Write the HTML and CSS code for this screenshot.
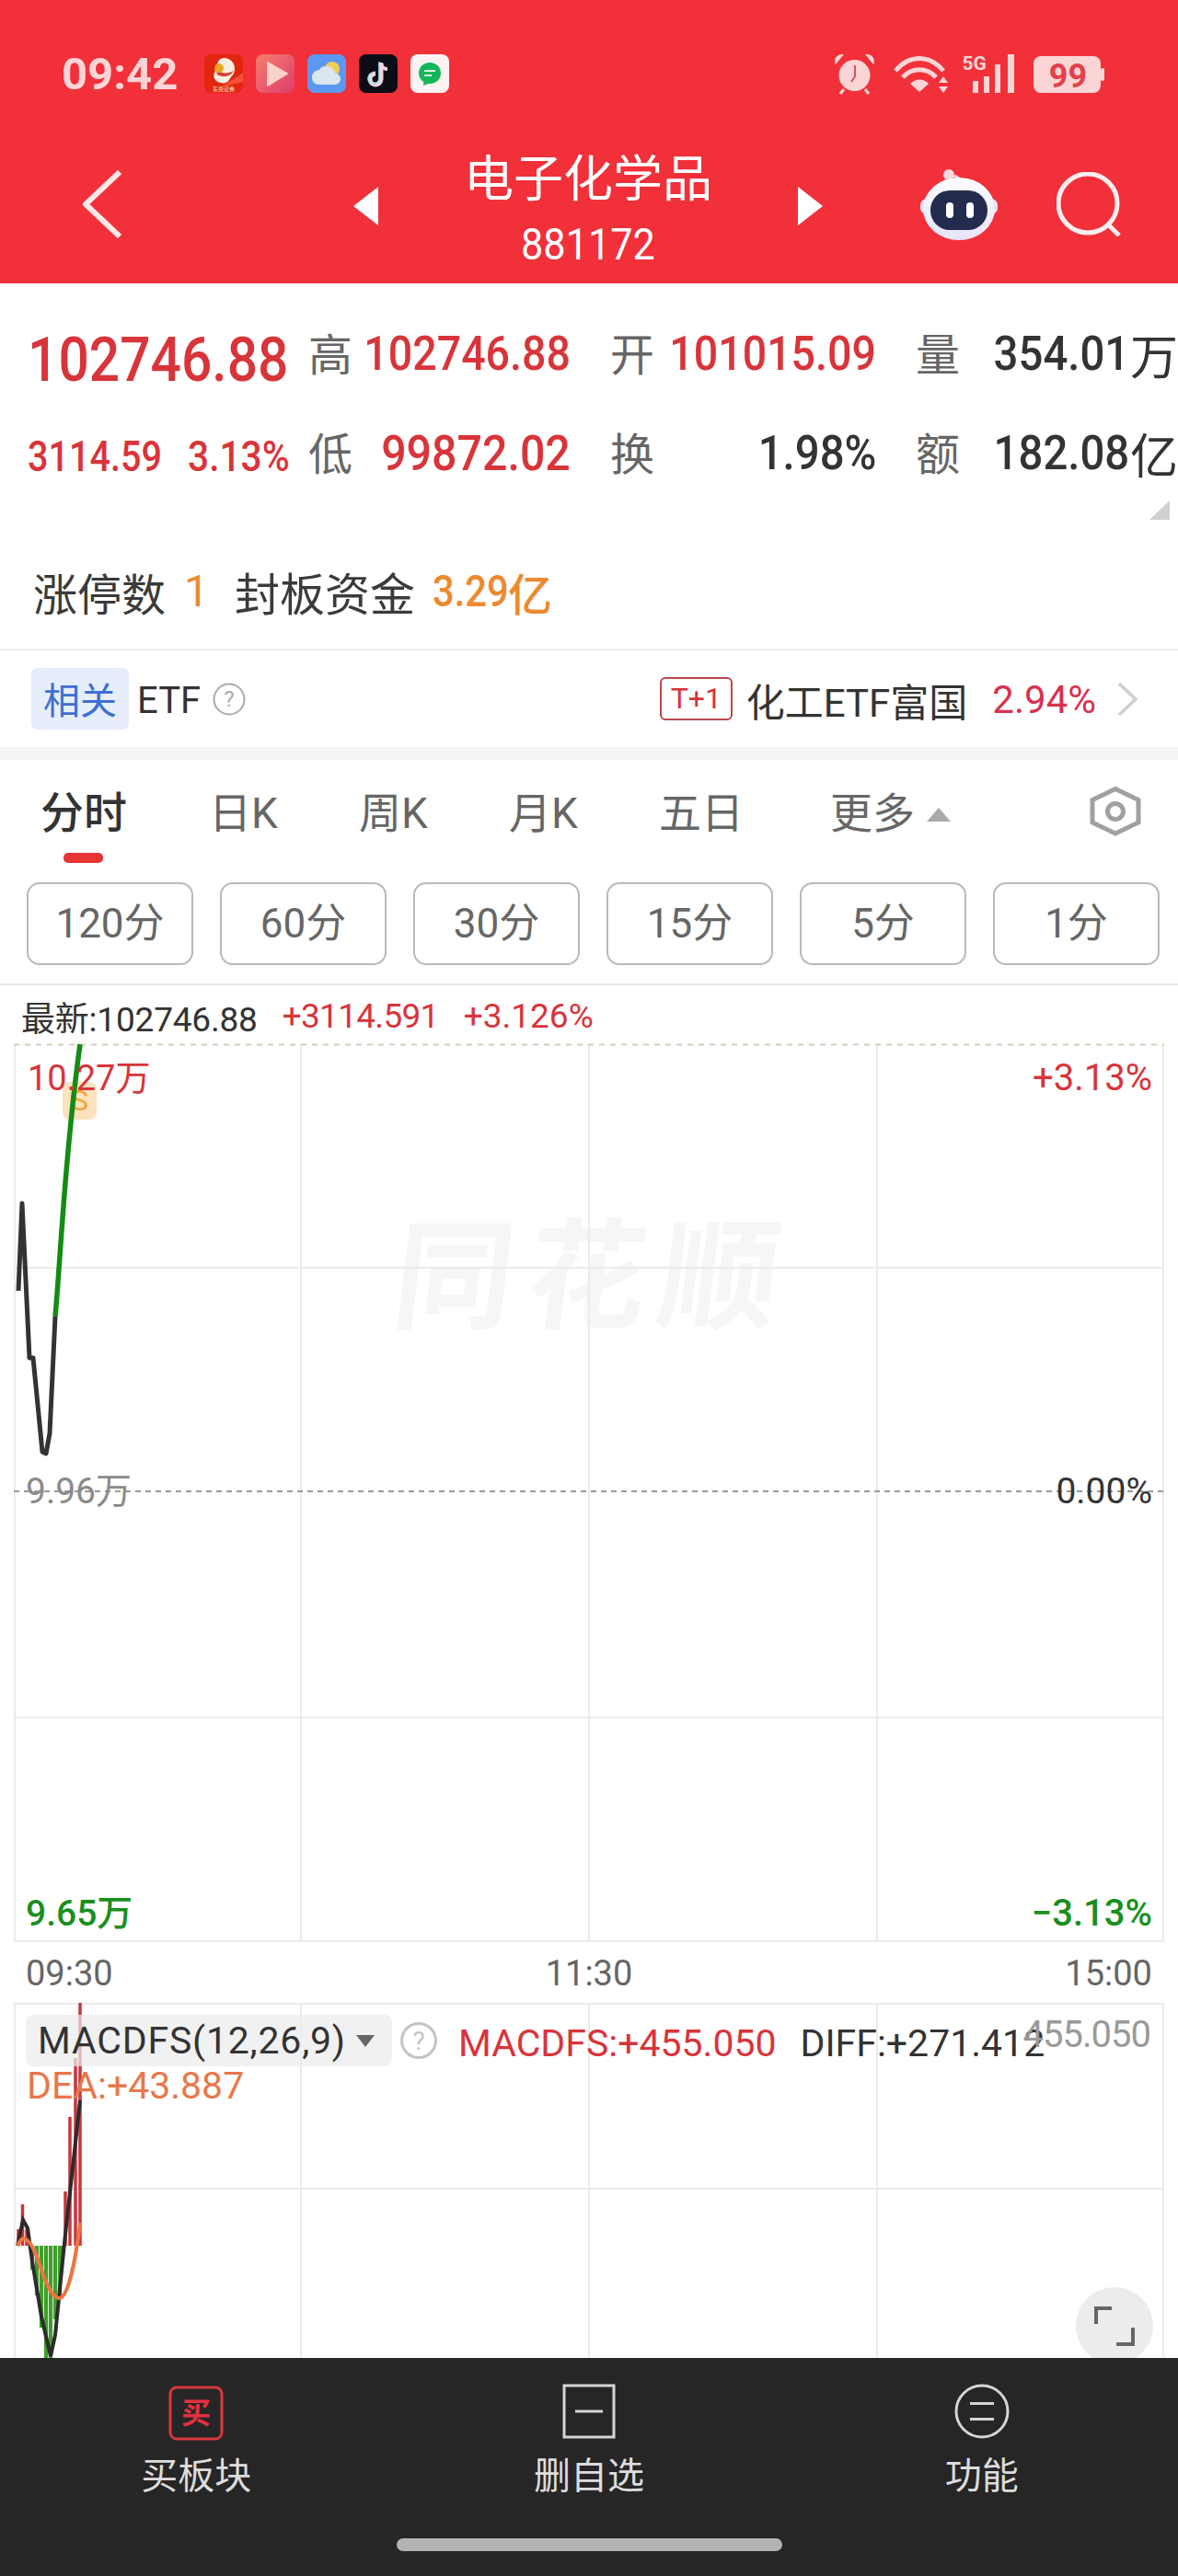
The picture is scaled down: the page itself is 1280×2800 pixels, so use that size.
FILE: index.html
```html
<!DOCTYPE html>
<html lang="zh-CN">
<head>
<meta charset="utf-8">
<title>电子化学品</title>
<link rel="stylesheet" href="styles.css">
</head>
<body>
<div class="phone">
  <header class="header">
    <div class="status">
      <span class="clock">09:42</span>
      <div class="apps">
        <svg class="app" viewBox="0 0 42 42"><rect width="42" height="42" rx="8" fill="#e2260f"/><path d="M42 20 L18 36 L42 30Z" fill="#f4503a"/><path d="M21 4c8 0 12 6 12 12 0 6-4 8-6 12-2 3-6 4-9 3-6-1-9-6-7-11 1-4 3-5 3-8 0-4 3-8 7-8z" fill="#fbeee0"/><path d="M12 15c5 6 12 7 20 3-3 6-12 8-18 4z" fill="#d8442f"/><circle cx="16" cy="15" r="5" fill="#e9a81f"/><text class="app-tiny" x="21" y="39.500">东莞证券</text></svg>
        <svg class="app" viewBox="0 0 42 42"><defs><linearGradient id="pl" x1="0" y1="0" x2="1" y2="1"><stop offset="0" stop-color="#f77d6d"/><stop offset="1" stop-color="#dd3d6c"/></linearGradient></defs><rect width="42" height="42" rx="8" fill="url(#pl)"/><path d="M13 9 L34 21 L13 34Z" fill="#fbd2c8" stroke="#fbd2c8" stroke-width="2" stroke-linejoin="round"/></svg>
        <svg class="app" viewBox="0 0 42 42"><rect width="42" height="42" rx="8" fill="#5c97f2"/><circle cx="27" cy="16" r="8" fill="#f3cd55"/><path d="M13 33c-5 0-8-3-8-8s4-8 8-8c2-4 6-5 10-4 4 1 7 4 7 8 4 0 6 3 6 6s-3 6-6 6z" fill="#dbe6ef"/></svg>
        <svg class="app" viewBox="0 0 42 42"><rect width="42" height="42" rx="8" fill="#0c0c14"/><path d="M24 10v17a6 6 0 1 1-6-6" fill="none" stroke="#f5d5dc" stroke-width="5"/><path d="M24 9c0 4 3 7 7 7" fill="none" stroke="#f5d5dc" stroke-width="4"/><path d="M22 8v18a6 6 0 1 1-6-6" fill="none" stroke="#8fe3e8" stroke-width="1.500"/></svg>
        <svg class="app" viewBox="0 0 42 42"><rect width="42" height="42" rx="8" fill="#fdf3f3"/><path d="M21 9c7 0 12 5 12 11.500S28 32 21 32c-2 0-3 0-4 1l-3 1 .5-4C11 28 9 24 9 20.500 9 14 14 9 21 9z" fill="#14b65a"/><path d="M15 18h12M15 23h8" stroke="#dff5e8" stroke-width="2"/></svg>
      </div>
      <div class="sys">
        <svg class="ic-alarm" viewBox="907 57 43 46"><circle cx="928.500" cy="82" r="17" fill="#fbd5d5"/><path d="M908 70c-3-6 2-12 9-11z M949 70c3-6-2-12-9-11z" fill="#fbd5d5"/><path d="M917 97l-4 5M940 97l4 5" stroke="#fbd5d5" stroke-width="3"/><path d="M929 71v12l-4 6" stroke="#d2545a" stroke-width="2" fill="none"/></svg>
        <svg class="ic-wifi" viewBox="971 57 60 46"><g fill="none" stroke="#fbd5d5" stroke-width="5"><path d="M973 77c15-18 37-18 52 0"/><path d="M981 84c10-11 26-11 36 0"/></g><path d="M989 91c6-6 15-6 20 0l-10 9z" fill="#fbd5d5"/><path d="M1025 83l5 7h-10z M1025 101l5-7h-10z" fill="#fbd5d5"/></svg>
        <svg class="ic-signal" viewBox="1046 57 56 46"><text class="five-g" x="1045.500" y="76">5G</text><g fill="#fbd5d5"><rect x="1057" y="88" width="6" height="13"/><rect x="1069" y="83" width="6" height="18"/><rect x="1081" y="70" width="6" height="31"/><rect x="1095" y="59" width="7" height="42"/></g></svg>
        <svg class="ic-batt" viewBox="1123 57 77 46"><rect x="1123" y="61" width="73" height="40" rx="8" fill="#fbd5d5"/><rect x="1196" y="74" width="4" height="14" rx="2" fill="#fbd5d5"/><text class="batt-t" x="1160.500" y="95">99</text></svg>
      </div>
    </div>
    <nav class="nav">
      <svg class="ic-back" viewBox="90 184 42 74"><path d="M130 186 L93 221 L130 256" fill="none" stroke="#fde8e8" stroke-width="6"/></svg>
      <div class="tri-l"></div>
      <div class="title-wrap">
        <div class="title">电子化学品</div>
        <div class="code"><span class="n n-c">881172</span></div>
      </div>
      <div class="tri-r"></div>
      <svg class="ic-robot" viewBox="1000 182 84 77"><defs><linearGradient id="rb" x1="0" y1="0" x2="0" y2="1"><stop offset="0" stop-color="#fdfcff"/><stop offset="1" stop-color="#e6e4f8"/></linearGradient></defs><path d="M1033 190c8-2 12 4 11 12" fill="none" stroke="#fad7dc" stroke-width="3"/><circle cx="1031" cy="188" r="6" fill="#fad7dc"/><rect x="1000" y="214" width="84" height="17" rx="7" fill="#e4e2f7"/><ellipse cx="1042" cy="225" rx="39" ry="34" fill="url(#rb)"/><rect x="1011" y="205" width="62" height="43" rx="21" fill="#232c4e"/><rect x="1028" y="218" width="8" height="17" rx="4" fill="#fff"/><rect x="1050" y="218" width="8" height="17" rx="4" fill="#fff"/></svg>
      <svg class="ic-search" viewBox="1146 188 70 70"><circle cx="1180" cy="222" r="32" fill="none" stroke="#fdeeee" stroke-width="5"/><path d="M1202 245l12 12" stroke="#fdeeee" stroke-width="5"/></svg>
    </nav>
  </header>

  <section class="quote">
    <div class="q-grid">
      <div class="q-big"><span class="n n-l">102746.88</span></div>
      <div class="lab">高</div>
      <div class="val up"><span class="n">102746.88</span></div>
      <div class="lab lab-pad">开</div>
      <div class="val up"><span class="n">101015.09</span></div>
      <div class="lab lab-pad">量</div>
      <div class="val"><span class="n n-w">354.01</span><span class="cjk">万</span></div>
      <div class="q-chg"><span class="n n-l chg1">3114.59</span><span class="n n-l chg2">3.13%</span></div>
      <div class="lab">低</div>
      <div class="val up val-lg"><span class="n">99872.02</span></div>
      <div class="lab lab-pad">换</div>
      <div class="val"><span class="n n-pct">1.98%</span></div>
      <div class="lab lab-pad">额</div>
      <div class="val"><span class="n n-w">182.08</span><span class="cjk">亿</span></div>
    </div>
    <div class="corner"></div>
  </section>

  <section class="stats">
    <span>涨停数</span><span class="or or-1">1</span><span class="s-2">封板资金</span><span class="or or-2"><span class="n n-l n-amt">3.29</span><span class="cjk">亿</span></span>
  </section>

  <section class="etf">
    <span class="etf-tag">相关</span>
    <span class="etf-name">ETF</span>
    <svg class="ic-q" viewBox="0 0 36 36"><circle cx="18" cy="18" r="16.500" fill="none" stroke="#aaa" stroke-width="2"/><text class="q-t" x="18" y="26">?</text></svg>
    <span class="t1">T+1</span>
    <span class="etf-fund">化工ETF富国</span>
    <span class="etf-pct">2.94%</span>
    <svg class="ic-chev" viewBox="0 0 24 38"><path d="M3 2 L21 19 L3 36" fill="none" stroke="#cfcfcf" stroke-width="3.500"/></svg>
  </section>
  <div class="band"></div>

  <section class="tabs">
    <div class="tab tab-on">分时<i class="bar"></i></div>
    <div class="tab">日K</div>
    <div class="tab">周K</div>
    <div class="tab">月K</div>
    <div class="tab">五日</div>
    <div class="tab tab-more">更多<i class="tri-up"></i>
      <svg class="ic-gear" viewBox="1182 855 56 54"><path d="M1210 857.500l25 12v24.500L1210 906l-25-12v-24.500z" fill="none" stroke="#a0a0a0" stroke-width="5"/><circle cx="1210" cy="882" r="8.500" fill="none" stroke="#a0a0a0" stroke-width="5"/></svg>
    </div>
  </section>

  <section class="periods">
    <div class="pd">120分</div><div class="pd">60分</div><div class="pd">30分</div><div class="pd">15分</div><div class="pd">5分</div><div class="pd">1分</div>
  </section>

  <section class="info">
    <span class="info-a">最新:102746.88</span><span class="info-b">+3114.591</span><span class="info-c">+3.126%</span>
  </section>

  <section class="chart">
    <div class="watermark">同花顺</div>
    <div class="s-badge">S</div>
    <svg class="chart-svg" viewBox="15 1137 1250 976">
      <g class="grid">
        <path d="M16 1137V2113M327 1137V2113M640 1137V2113M953 1137V2113M1264 1137V2113M15 1380H1265M15 1869H1265M15 2112H1265"/>
      </g>
      <path class="dash-top" d="M15 1137.500H1265"/>
      <path class="dash-mid" d="M15 1623H1265"/>
      <path class="l-black" d="M20 1405L24 1310L32 1478L36 1478L46 1580L50 1582L54 1560L60 1433"/>
      <path class="l-green" d="M60 1433C63 1400 66 1350 70 1300C74 1250 79 1195 87 1137"/>
    </svg>
    <span class="cl up cl-hi">10.27万</span>
    <span class="cr up cr-hi">+3.13%</span>
    <span class="cl cl-mid">9.96万</span>
    <span class="cr cr-mid">0.00%</span>
    <span class="cl dn cl-lo">9.65万</span>
    <span class="cr dn cr-lo">−3.13%</span>
  </section>

  <div class="axis"><span>09:30</span><span>11:30</span><span>15:00</span></div>

  <section class="macd">
    <svg class="macd-svg" viewBox="15 2179 1250 386">
      <g class="grid">
        <path d="M16 2179V2565M327 2179V2565M953 2179V2565M640 2179V2565M1264 2179V2565M15 2180H1265M15 2381H1265"/>
      </g>
      <g class="bars-r">
        <path d="M20 2443V2425M24.500 2443V2398M29 2443V2425M71 2443V2384M76 2443V2303M82 2443V2239M87 2443V2179"/>
      </g>
      <g class="bars-g">
        <path d="M35 2443V2469M40 2443V2497M45 2443V2532M50 2443V2565M55 2443V2565M60 2443V2523M65 2443V2500M67.500 2443V2458"/>
      </g>
      <path class="l-black2" d="M19 2443L25 2415L30 2424L35 2460L45 2520L55 2563L60 2540L70 2440L87 2285"/>
      <path class="l-orange" d="M19 2443C22 2436 25 2434 28 2436C36 2440 42 2460 48 2478C53 2490 58 2500 65 2500C74 2498 82 2460 87 2418"/>
    </svg>
    <div class="macd-head">
      <div class="m-sel">MACDFS(12,26,9)<i class="tri-dn"></i></div>
      <svg class="ic-mq" viewBox="0 0 40 40"><circle cx="20" cy="20" r="18.500" fill="none" stroke="#c4c4c4" stroke-width="3"/><text class="mq-t" x="20" y="30">?</text></svg>
      <span class="m-a up">MACDFS:+455.050</span>
      <span class="m-b">DIFF:+271.412</span>
    </div>
    <span class="m-dea">DEA:+43.887</span>
    <span class="m-max">455.050</span>
    <div class="m-zoom"><svg viewBox="1169 2488 84 84"><path d="M1191 2528V2511H1208M1231 2532V2550H1213" fill="none" stroke="#666" stroke-width="4"/></svg></div>
  </section>

  <footer class="foot">
    <div class="foot-row">
      <div class="f-item">
        <svg class="f-ic" viewBox="0 0 60 62"><rect x="2" y="4" width="56" height="56" rx="7" fill="none" stroke="#d9383f" stroke-width="3"/><text class="buy-t" x="30" y="43">买</text></svg>
        <span>买板块</span>
      </div>
      <div class="f-item">
        <svg class="f-ic" viewBox="0 0 60 62"><rect x="3" y="2" width="54" height="56" fill="none" stroke="#d5d5d5" stroke-width="3"/><path d="M15 30H45" stroke="#d5d5d5" stroke-width="3"/></svg>
        <span>删自选</span>
      </div>
      <div class="f-item">
        <svg class="f-ic" viewBox="0 0 60 62"><circle cx="30" cy="30" r="28" fill="none" stroke="#d5d5d5" stroke-width="3"/><path d="M17 21.500H43M17 38.500H43" stroke="#d5d5d5" stroke-width="3"/></svg>
        <span>功能</span>
      </div>
    </div>
    <div class="home"></div>
  </footer>
</div>
</body>
</html>
```

FILE: styles.css
```css
* { box-sizing: border-box; }
html, body { margin: 0; padding: 0; background: #fff; }
body { font-family: Roboto, "Noto Sans CJK SC", sans-serif; color: #333; }
.phone { width: 1280px; height: 2800px; overflow: hidden; display: flex; flex-direction: column; position: relative; }
svg { display: block; flex: none; }
i { display: block; }

.up { color: #d8343a; }
.dn { color: #1a8f1e; }

/* narrowed digits */
.n { display: inline-block; transform: scaleX(.895); transform-origin: right center; }
.n-l { transform-origin: left center; }
.n-c { transform-origin: center; transform: scaleX(.9); }
.n-w { transform: scaleX(.91); margin-right: 1px; }
.n-pct { transform: scaleX(.91); }

/* header */
.header { height: 308px; background: #f1303a; color: #fff; flex: none; }
.status { height: 160px; display: flex; align-items: center; padding-left: 67px; padding-right: 80px; }
.clock { width: 155px; font-size: 49px; font-weight: 700; color: #fbd5d5; }
.apps { display: flex; gap: 14px; }
.app { width: 42px; height: 42px; }
.app-tiny { font-size: 6px; fill: #fde7c8; text-anchor: middle; font-family: "Noto Sans CJK SC", sans-serif; }
.sys { margin-left: auto; display: flex; align-items: center; }
.ic-alarm { width: 43px; height: 46px; }
.ic-wifi { width: 60px; height: 46px; margin-left: 21px; }
.ic-signal { width: 56px; height: 46px; margin-left: 15px; }
.ic-batt { width: 77px; height: 46px; margin-left: 21px; overflow: visible; }
.five-g { font-size: 21px; font-weight: 700; fill: #fbd5d5; font-family: Roboto, sans-serif; }
.batt-t { font-size: 36px; font-weight: 700; fill: #e5404a; text-anchor: middle; font-family: Roboto, sans-serif; }

.nav { height: 148px; padding: 0 0 24px 90px; display: flex; align-items: center; }
.ic-back { width: 42px; height: 74px; }
.tri-l { width: 0; height: 0; margin-left: 252px; border-style: solid; border-width: 21px 27px 21px 0; border-color: transparent #fff transparent transparent; margin-top: 4px; }
.title-wrap { width: 456px; align-self: flex-start; text-align: center; }
.title { font-size: 54px; line-height: 62px; font-family: "Noto Sans CJK SC", sans-serif; }
.code { font-size: 48px; line-height: 62px; margin-top: 13px; }
.tri-r { width: 0; height: 0; border-style: solid; border-width: 21px 0 21px 27px; border-color: transparent transparent transparent #fff; margin-top: 4px; }
.ic-robot { width: 84px; height: 77px; margin-left: 106px; }
.ic-search { width: 70px; height: 70px; margin-left: 64px; }

/* quote */
.quote { height: 292px; position: relative; flex: none; padding: 42px 0 0 30px; }
.q-grid { display: grid; grid-template-columns: 305px 46px 239px 90px 242px 90px 238px; grid-auto-rows: 70px; row-gap: 38px; align-items: center; }
.q-big { font-size: 66px; font-weight: 500; color: #d8343a; line-height: 70px; padding-top: 14px; white-space: nowrap; }
.q-big .n { transform: scaleX(.89); }
.lab { font-size: 48px; color: #666; font-family: "Noto Sans CJK SC", sans-serif; line-height: 64px; padding-bottom: 6px; white-space: nowrap; }
.lab-pad { padding-left: 43px; }
.val { font-size: 52px; font-weight: 500; display: flex; justify-content: flex-end; line-height: 70px; white-space: nowrap; color: #333; }
.val.up { color: #d8343a; }
.val-lg { font-size: 54px; }
.cjk { font-family: "Noto Sans CJK SC", sans-serif; font-weight: 400; }
.q-chg { font-size: 46px; font-weight: 500; color: #d8343a; display: flex; line-height: 70px; padding-top: 6px; }
.chg1 { width: 174px; transform: scaleX(.86); }
.chg2 { transform: scaleX(.885); }
.corner { position: absolute; right: 9px; bottom: 35px; width: 0; height: 0; border-style: solid; border-width: 0 0 21px 22px; border-color: transparent transparent #d0d0d0 transparent; }

/* stats */
.stats { height: 107px; flex: none; padding: 0 0 20px 36px; display: flex; align-items: center; font-size: 48px; font-family: "Noto Sans CJK SC", sans-serif; border-bottom: 2px solid #ececec; color: #3a3a3a; }
.or { color: #ec8a2f; font-family: Roboto, "Noto Sans CJK SC", sans-serif; }
.or-1 { margin-left: 20px; width: 20px; }
.s-2 { margin-left: 35px; font-size: 49px; }
.or-2 { margin-left: 19px; font-weight: 500; display: flex; align-items: center; }
.n-amt { transform: scaleX(.87); width: 82px; }
.or-2 .cjk { font-weight: 500; }

/* etf */
.etf { height: 105px; flex: none; display: flex; align-items: center; padding: 0 43px 0 34px; }
.etf-tag { width: 106px; height: 67px; background: #e6eefb; color: #3f6fd0; border-radius: 6px; font-size: 40px; line-height: 67px; text-align: center; font-family: "Noto Sans CJK SC", sans-serif; }
.etf-name { font-size: 40px; color: #333; margin-left: 9px; padding-top: 4px; }
.ic-q { width: 36px; height: 36px; margin-left: 13px; }
.q-t { font-size: 24px; fill: #aaa; text-anchor: middle; font-family: Roboto, sans-serif; }
.t1 { margin-left: auto; width: 79px; height: 47px; border: 2px solid #b8494e; border-radius: 6px; font-size: 32px; line-height: 43px; color: #d8343a; text-align: center; }
.etf-fund { font-size: 42px; margin-left: 15px; color: #333; white-space: nowrap; padding-top: 2px; }
.etf-pct { font-size: 42px; margin-left: 27px; color: #d9304f; padding-top: 2px; }
.ic-chev { width: 24px; height: 38px; margin-left: 22px; }
.band { height: 14px; background: #f4f4f4; flex: none; }

/* tabs */
.tabs { height: 133px; flex: none; padding: 30px 0 0 44px; display: grid; grid-template-columns: 183px 163px 163px 163px 186px 1fr; align-items: start; }
.tab { font-size: 46px; line-height: 56px; color: #666; white-space: nowrap; }
.tab-on { color: #333; font-weight: 500; font-size: 47px; }
.bar { width: 43px; height: 11px; margin: 15px 0 0 25px; background: #e63535; border-radius: 5px; }
.tab-more { display: flex; padding-right: 40px; }
.tri-up { width: 0; height: 0; margin: 22px 0 0 13px; border-style: solid; border-width: 0 13px 15px 13px; border-color: transparent transparent #aaa transparent; }
.ic-gear { width: 56px; height: 54px; margin-left: auto; margin-top: -1px; }

/* periods */
.periods { height: 112px; flex: none; padding: 0 21px 0 29px; display: grid; grid-template-columns: repeat(6, 181px); column-gap: 29px; align-items: start; border-bottom: 2px solid #e8e8e8; }
.pd { height: 90px; border: 2px solid #b9b9b9; border-radius: 14px; font-size: 44px; line-height: 86px; text-align: center; color: #666; }

/* info */
.info { height: 64px; flex: none; padding: 3px 0 0 23px; display: flex; align-items: center; font-size: 37px; }
.info-a { color: #333; letter-spacing: -.2px; }
.info-b { color: #d8343a; margin-left: 27px; letter-spacing: -.7px; }
.info-c { color: #d8343a; margin-left: 27px; }

/* chart */
.chart { position: relative; width: 1250px; height: 976px; margin-left: 15px; flex: none; }
.chart-svg, .macd-svg { position: absolute; left: 0; top: 0; width: 100%; height: 100%; overflow: visible; }
.grid path { stroke: #ebebeb; stroke-width: 2; fill: none; }
.dash-top { stroke: #d6cdb8; stroke-width: 2; stroke-dasharray: 6 6; fill: none; }
.dash-mid { stroke: #999; stroke-width: 2; stroke-dasharray: 6 5; fill: none; }
.l-black { stroke: #333; stroke-width: 5; fill: none; stroke-linejoin: round; }
.l-green { stroke: #138c14; stroke-width: 5.500; fill: none; }
.watermark { position: absolute; left: 415px; top: 162px; font-size: 130px; line-height: 160px; font-weight: 700; color: #f6f6f6; transform: skewX(-7deg); white-space: nowrap; font-family: "Noto Sans CJK SC", sans-serif; letter-spacing: 14px; }
.s-badge { position: absolute; left: 53px; top: 41px; width: 37px; height: 41px; background: #fde2bf; border-radius: 8px; color: #f0a63a; font-size: 32px; line-height: 41px; text-align: center; }
.cl, .cr { position: absolute; font-size: 39px; line-height: 44px; white-space: nowrap; }
.cl { left: 13px; }
.cr { right: 13px; }
.cl-hi { left: 15px; top: 15px; font-size: 38px; }
.cr-hi { top: 15px; font-size: 40px; }
.cl-mid { top: 464px; color: #8a8a8a; }
.cr-mid { top: 464px; color: #333; }
.cl-lo { top: 923px; font-weight: 500; }
.cr-lo { top: 923px; font-size: 40px; font-weight: 500; }

.axis { height: 66px; flex: none; padding: 2px 28px 0; display: flex; justify-content: space-between; align-items: center; font-size: 38px; color: #666; }

/* macd */
.macd { position: relative; width: 1250px; height: 386px; margin-left: 15px; flex: none; overflow: hidden; }
.bars-r path { stroke: #c8363c; stroke-width: 3.500; fill: none; }
.bars-g path { stroke: #3f9f2a; stroke-width: 4.200; fill: none; }
.l-black2 { stroke: #2b2b2b; stroke-width: 4; fill: none; }
.l-orange { stroke: #ee7440; stroke-width: 4; fill: none; }
.macd-head { position: absolute; left: 13px; top: 13px; display: flex; align-items: center; font-size: 41px; white-space: nowrap; }
.m-sel { width: 398px; height: 56px; background: rgba(236,236,236,.72); border-radius: 8px; padding-left: 13px; line-height: 56px; color: #333; display: flex; align-items: center; letter-spacing: .8px; }
.tri-dn { width: 0; height: 0; margin-left: 11px; border-style: solid; border-width: 13px 10.500px 0 10.500px; border-color: #666 transparent transparent transparent; }
.ic-mq { width: 40px; height: 40px; margin-left: 9px; }
.mq-t { font-size: 28px; fill: #c4c4c4; text-anchor: middle; font-family: Roboto, sans-serif; }
.m-a { margin-left: 23px; margin-top: 6px; }
.m-b { margin-left: 26px; margin-top: 6px; color: #333; }
.m-dea { position: absolute; left: 14px; top: 66px; font-size: 41px; line-height: 48px; color: #e8774a; white-space: nowrap; }
.m-max { position: absolute; right: 15px; top: 11px; font-size: 40px; line-height: 48px; color: #999; letter-spacing: -1px; }
.m-zoom { position: absolute; left: 1154px; top: 309px; width: 84px; height: 84px; border-radius: 50%; background: #ececec; }
.m-zoom svg { width: 84px; height: 84px; }

/* footer */
.foot { height: 235px; flex: 1 0 235px; background: #262626; color: #ddd; display: flex; flex-direction: column; position: relative; }
.foot-row { display: grid; grid-template-columns: repeat(3, 1fr); padding-top: 28px; }
.f-item { display: flex; flex-direction: column; align-items: center; font-size: 40px; line-height: 44px; font-family: "Noto Sans CJK SC", sans-serif; }
.f-ic { width: 60px; height: 62px; margin-bottom: 13px; }
.buy-t { font-size: 32px; font-weight: 700; fill: #e2303f; text-anchor: middle; font-family: "Noto Sans CJK SC", sans-serif; }
.home { width: 419px; height: 14px; background: #b3b3b3; border-radius: 7px; margin: 49px auto 0; }
```
